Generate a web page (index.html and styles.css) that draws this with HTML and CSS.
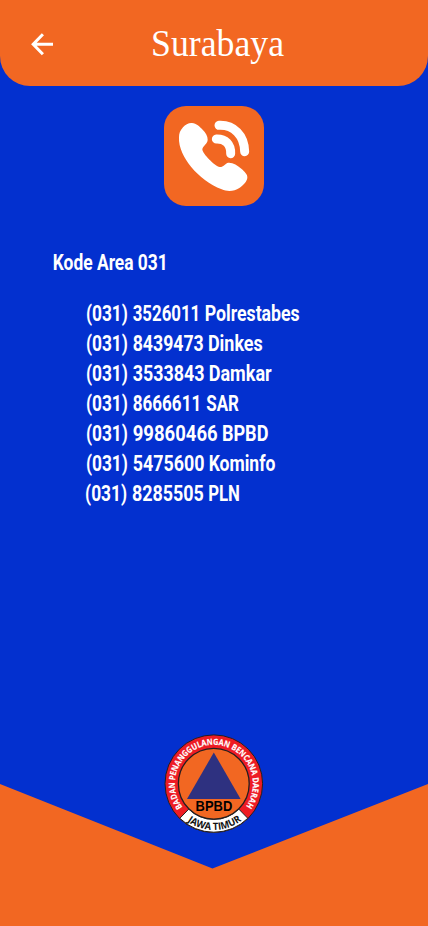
FILE: index.html
```html
<!DOCTYPE html>
<html lang="id">
<head>
<meta charset="utf-8">
<meta name="viewport" content="width=device-width, initial-scale=1">
<title>Surabaya</title>
<link rel="stylesheet" href="styles.css">
</head>
<body>
<div class="screen">
  <header class="header">
    <svg class="back" viewBox="0 0 24 24"><path d="M12.9 2.2 3.2 12.2l9.7 10M3.5 12.2H23"/></svg>
    <svg class="title" viewBox="0 0 136 50"><text x="0" y="38" textLength="133" lengthAdjust="spacingAndGlyphs">Surabaya</text></svg>
  </header>
  <main class="content">
    <div class="phone">
      <svg viewBox="27 24 300 300">
        <path class="handset" d="M84 88C91 79 102 74 111 75C124 76 134 86 143 95C152 104 158 113 158 125C158 138 143 143 142 154C142 167 180 205 194 207C205 208 210 196 220 194C234 193 247 202 259 212C269 221 278 229 277 239C276 250 265 262 253 270C238 280 218 282 200 274C164 259 133 236 108 206C88 182 70 148 72 118C72 106 75 98 84 88Z"/>
        <path class="wave" d="M192 82C236 80 268 112 269 161"/>
        <path class="wave" d="M184 123C211 122 228 139 227 167"/>
      </svg>
    </div>
    <h2 class="area"><svg class="line" viewBox="0 0 260 30"><text x="12.8" y="22.5" textLength="115" lengthAdjust="spacingAndGlyphs">Kode Area 031</text></svg></h2>
    <ul class="numbers">
      <li><svg class="line" viewBox="0.6 0.5 260 30"><text y="23"><tspan x="5.5" textLength="42" lengthAdjust="spacingAndGlyphs">(031)</tspan> <tspan x="52.3" textLength="67.5" lengthAdjust="spacingAndGlyphs">3526011</tspan> <tspan x="124.3" textLength="95" lengthAdjust="spacingAndGlyphs">Polrestabes</tspan></text></svg></li>
      <li><svg class="line" viewBox="0.6 0.5 260 30"><text y="23"><tspan x="5.5" textLength="42" lengthAdjust="spacingAndGlyphs">(031)</tspan> <tspan x="52.3" textLength="71" lengthAdjust="spacingAndGlyphs">8439473</tspan> <tspan x="127.5" textLength="54.8" lengthAdjust="spacingAndGlyphs">Dinkes</tspan></text></svg></li>
      <li><svg class="line" viewBox="0.6 0.5 260 30"><text y="23"><tspan x="5.5" textLength="42" lengthAdjust="spacingAndGlyphs">(031)</tspan> <tspan x="52.3" textLength="71.7" lengthAdjust="spacingAndGlyphs">3533843</tspan> <tspan x="128.3" textLength="63" lengthAdjust="spacingAndGlyphs">Damkar</tspan></text></svg></li>
      <li><svg class="line" viewBox="0.6 0.5 260 30"><text y="23"><tspan x="5.5" textLength="42" lengthAdjust="spacingAndGlyphs">(031)</tspan> <tspan x="52.3" textLength="68.5" lengthAdjust="spacingAndGlyphs">8666611</tspan> <tspan x="125.8" textLength="32.7" lengthAdjust="spacingAndGlyphs">SAR</tspan></text></svg></li>
      <li><svg class="line" viewBox="0.6 0.5 260 30"><text y="23"><tspan x="5.5" textLength="42" lengthAdjust="spacingAndGlyphs">(031)</tspan> <tspan x="52.3" textLength="85" lengthAdjust="spacingAndGlyphs">99860466</tspan> <tspan x="141.5" textLength="46.5" lengthAdjust="spacingAndGlyphs">BPBD</tspan></text></svg></li>
      <li><svg class="line" viewBox="0.6 0.5 260 30"><text y="23"><tspan x="5.5" textLength="42" lengthAdjust="spacingAndGlyphs">(031)</tspan> <tspan x="52.3" textLength="71.7" lengthAdjust="spacingAndGlyphs">5475600</tspan> <tspan x="128.3" textLength="66.7" lengthAdjust="spacingAndGlyphs">Kominfo</tspan></text></svg></li>
      <li><svg class="line" viewBox="0.6 0.5 260 30"><text y="23"><tspan x="4.7" textLength="42" lengthAdjust="spacingAndGlyphs">(031)</tspan> <tspan x="51.5" textLength="72" lengthAdjust="spacingAndGlyphs">8285505</tspan> <tspan x="127.8" textLength="31.7" lengthAdjust="spacingAndGlyphs">PLN</tspan></text></svg></li>
    </ul>
  </main>
  <footer class="footer">
    <svg class="logo" viewBox="-49.8 -49.7 100 100">
      <defs>
        <path id="top-arc" d="M-31.2 23.5A39 39 0 1 1 32 22.5"/>
        <path id="bottom-arc" d="M-26.6 37.7A46.2 46.2 0 0 0 28.3 36.5"/>
      </defs>
      <circle class="ring" r="48.8"/>
      <path class="banner" d="M-34 34.6A48.5 48.5 0 0 0 34 34.6L25 25.4A35.6 35.6 0 0 1-25 25.4Z"/>
      <circle class="disc" r="35.4"/>
      <path class="triangle" d="M0-31.2 26.8 15.3H-26.8Z"/>
      <text class="acronym" x="-18.2" y="27.4" textLength="36.6" lengthAdjust="spacingAndGlyphs">BPBD</text>
      <text class="agency"><textPath href="#top-arc" textLength="171" lengthAdjust="spacingAndGlyphs">BADAN PENANGGULANGAN BENCANA DAERAH</textPath></text>
      <text class="province"><textPath href="#bottom-arc" textLength="58" lengthAdjust="spacingAndGlyphs">JAWA TIMUR</textPath></text>
    </svg>
    <svg class="chevron" viewBox="0 0 428 142"><path d="M0 0 212.5 84.5 428 0V142H0Z"/></svg>
  </footer>
</div>
</body>
</html>
```
FILE: styles.css
```css
* { box-sizing: border-box; }
body { margin: 0; background: #0330cf; }
svg { display: block; }
.screen {
  width: 428px;
  height: 926px;
  display: flex;
  flex-direction: column;
  overflow: hidden;
  background: #0330cf;
}
.header {
  height: 86px;
  flex: none;
  display: flex;
  align-items: flex-start;
  padding: 18px 0 0 30px;
  background: #f26722;
  border-radius: 0 0 30px 30px;
}
.back {
  width: 24px;
  height: 24px;
  margin-top: 14px;
  fill: none;
  stroke: #fff;
  stroke-width: 3;
}
.title { width: 136px; height: 50px; margin-left: 97px; overflow: visible; }
.title text { font: 37px "Liberation Serif", serif; fill: #fff; }
.content { flex: 1; padding-top: 20px; }
.phone {
  width: 100px;
  height: 100px;
  margin: 0 auto;
  border-radius: 22px;
  background: #f26722;
}
.handset { fill: #fff; }
.wave { fill: none; stroke: #fff; stroke-width: 27; stroke-linecap: round; }
.area { margin: 41px 0 0 40px; }
.line { width: 260px; height: 30px; overflow: visible; }
.line text {
  font: 700 22.3px Roboto, sans-serif;
  fill: #fff;
}
.numbers { list-style: none; margin: 21px 0 0; padding: 0 0 0 81px; }
.footer {
  height: 192px;
  flex: none;
  display: grid;
  grid-template-rows: 50px 142px;
  background: #0330cf;
}
.chevron { grid-area: 2 / 1; width: 428px; height: 142px; fill: #f26722; }
.logo { grid-area: 1 / 1; width: 100px; height: 100px; margin-left: 164px; z-index: 1; }
.ring { fill: #ed1c24; stroke: #231f20; stroke-width: 1; }
.banner { fill: #fff; stroke: #231f20; stroke-width: 1; }
.disc { fill: #f26722; stroke: #231f20; stroke-width: 1.3; }
.triangle { fill: #2e3180; }
.acronym { font: 700 15.5px "Liberation Sans", sans-serif; fill: #000; }
.agency { font: 700 8.5px "Open Sans", sans-serif; fill: #fff; stroke: #fff; stroke-width: 0.15; }
.province { font: 700 10px "Open Sans", sans-serif; fill: #111; }
```
